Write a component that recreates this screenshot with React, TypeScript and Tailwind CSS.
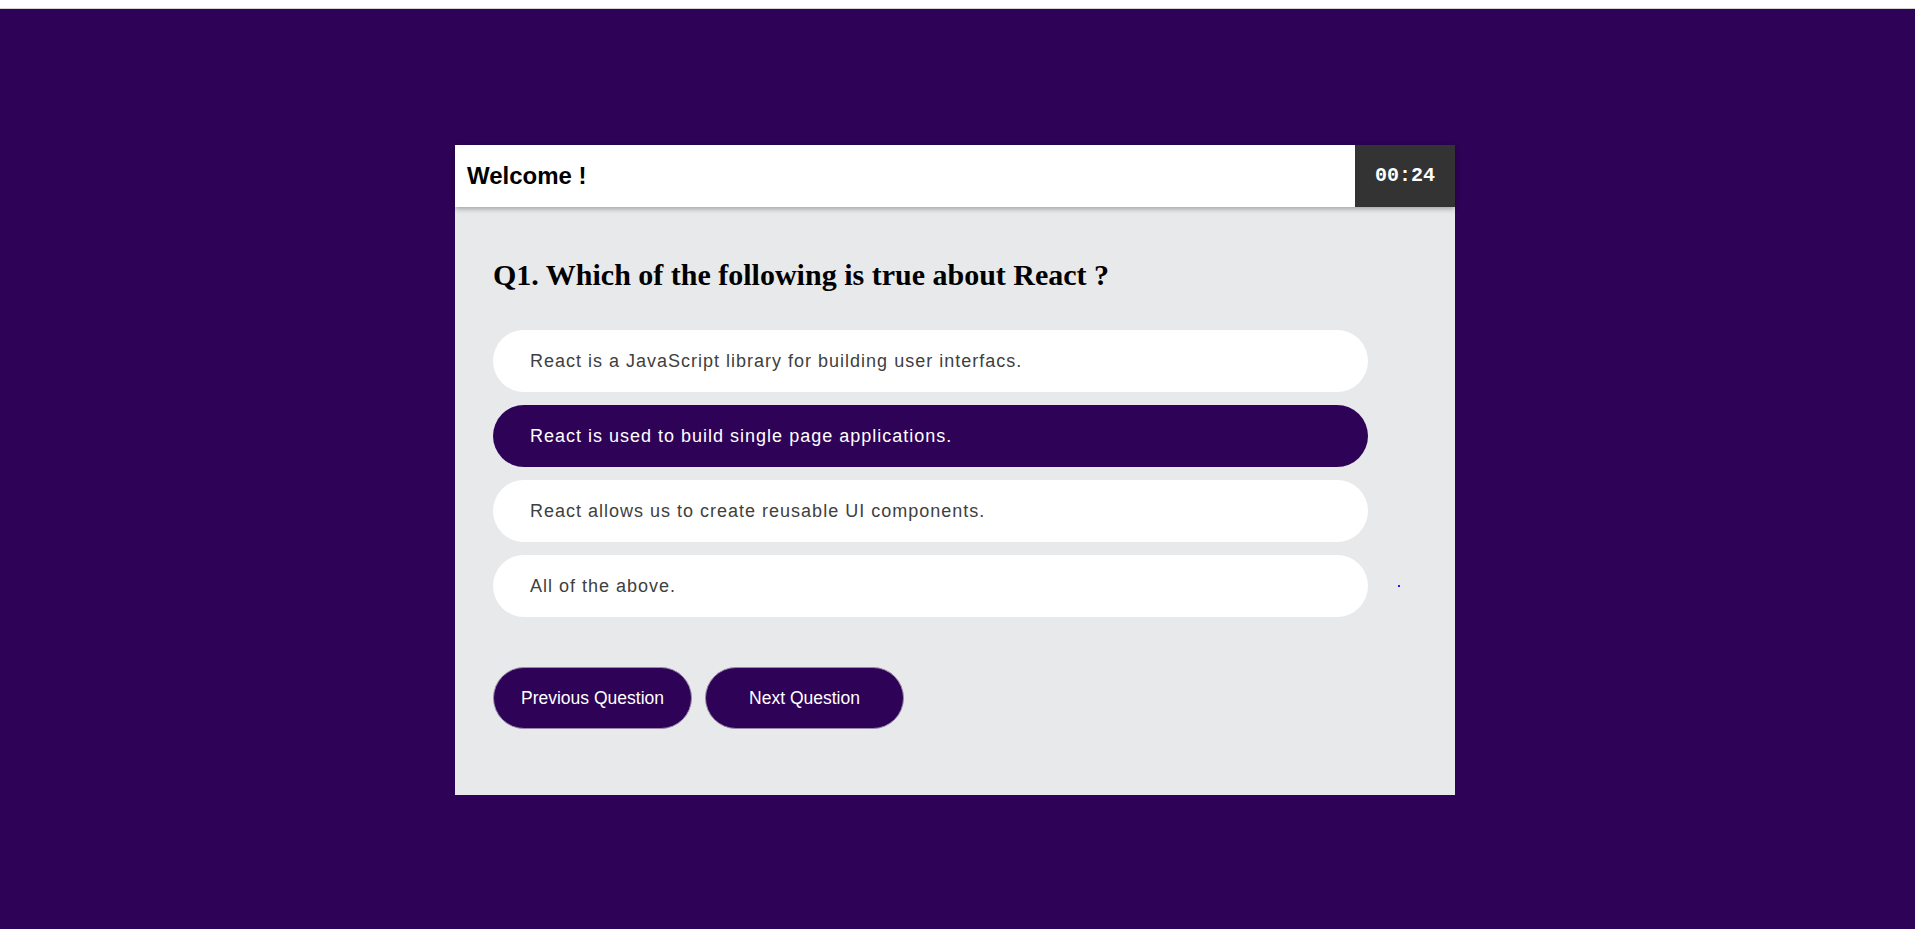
const options = [
  "React is a JavaScript library for building user interfacs.",
  "React is used to build single page applications.",
  "React allows us to create reusable UI components.",
  "All of the above.",
];

export default function App() {
  const selected = 1;

  return (
    <div className="min-h-[929px] bg-white">
      {/* top strip */}
      <div className="h-[9px] border-b border-[#d4d4d4] bg-white" />

      <div className="min-h-[920px] bg-[#2e0256] pl-[455px] pt-[136px]">
        <div className="flex h-[650px] w-[1000px] flex-col bg-[#e8e9eb]">
          {/* HEADER */}
          <div className="relative z-10 flex h-[62px] items-stretch justify-between bg-white shadow-[0_2px_5px_rgba(0,0,0,0.3)]">
            <h1 className="flex items-center pl-3 font-['Liberation_Sans',Arial,sans-serif] text-[24px] font-bold text-black">
              Welcome !
            </h1>
            <div className="flex w-[100px] items-center justify-center bg-[#333333] font-['Liberation_Mono','Courier_New',monospace] text-[20px] font-bold text-white">
              00:24
            </div>
          </div>

          {/* QUESTION */}
          <div className="pl-[38px]">
            <h2 className="mt-[53px] font-['Liberation_Serif','Times_New_Roman',serif] text-[30px] leading-[30px] font-bold text-black">
              Q1. Which of the following is true about React ?
            </h2>

            <div className="mt-10 flex flex-col gap-[13px]">
              {options.map((opt, i) => (
                <div key={i} className="flex items-center">
                  <div
                    className={
                      i === selected
                        ? "flex h-[62px] w-[875px] items-center rounded-full bg-[#2e0256] pl-[37px] font-['Liberation_Sans',Arial,sans-serif] text-[18px] tracking-[1px] text-white"
                        : "flex h-[62px] w-[875px] items-center rounded-full bg-white pl-[37px] font-['Liberation_Sans',Arial,sans-serif] text-[18px] tracking-[1px] text-[#404040]"
                    }
                  >
                    {opt}
                  </div>
                  {i === options.length - 1 && (
                    <span className="ml-[30px] h-[2px] w-[2px] bg-[#1a1aff]" />
                  )}
                </div>
              ))}
            </div>

            {/* BUTTONS */}
            <div className="mt-[50px] flex gap-[13px]">
              <button className="flex h-[62px] w-[199px] items-center justify-center rounded-full border border-[#9a8aa8] bg-[#2e0256] font-['Liberation_Sans',Arial,sans-serif] text-[17.5px] text-white">
                Previous Question
              </button>
              <button className="flex h-[62px] w-[199px] items-center justify-center rounded-full border border-[#9a8aa8] bg-[#2e0256] font-['Liberation_Sans',Arial,sans-serif] text-[17.5px] text-white">
                Next Question
              </button>
            </div>
          </div>
        </div>
      </div>
    </div>
  );
}
